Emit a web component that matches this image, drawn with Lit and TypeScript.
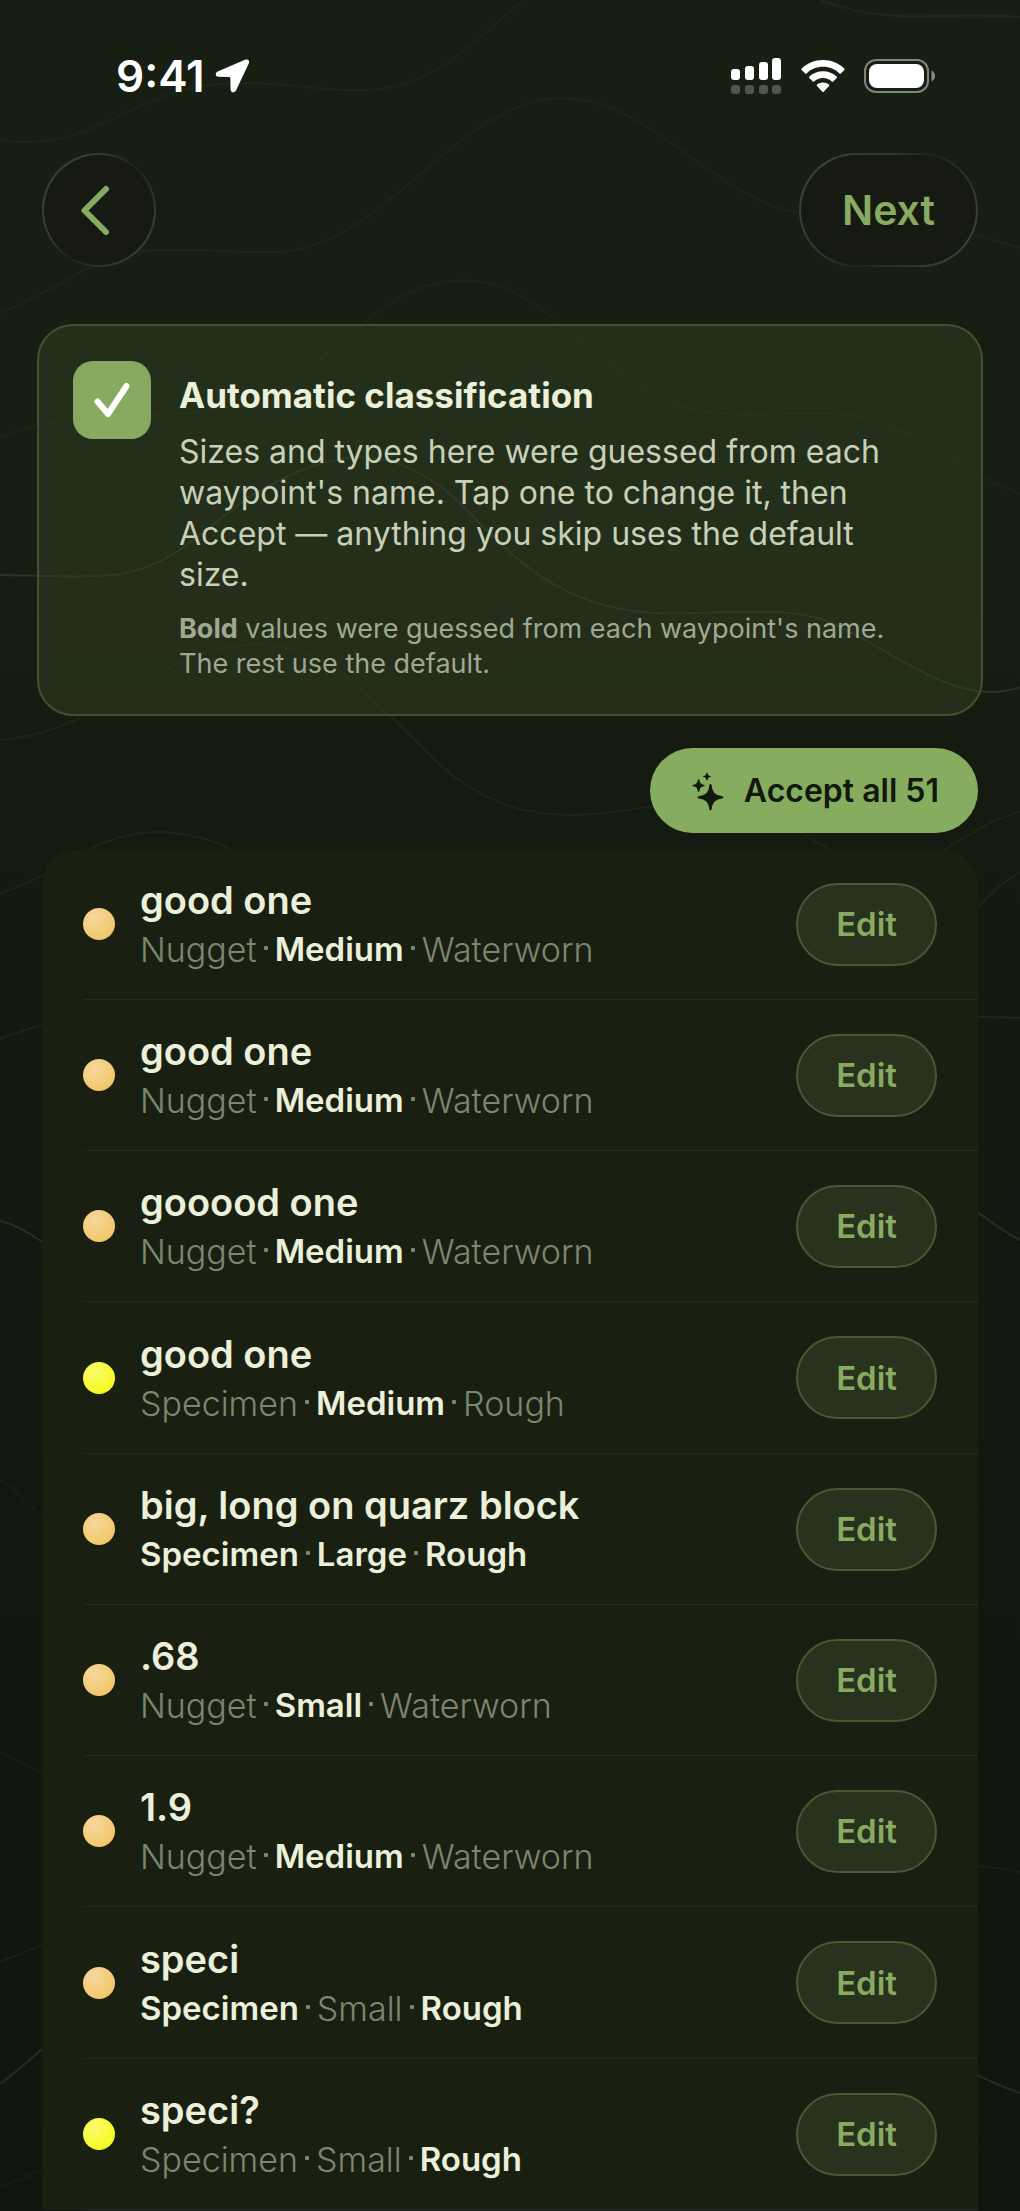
import { LitElement, html, css, svg } from "lit";
import { customElement, property, state } from "lit/decorators.js";
import { classMap } from "lit/directives/class-map.js";

interface Tag {
  text: string;
  guessed: boolean;
}

interface Waypoint {
  name: string;
  tone: "amber" | "yellow";
  tags: Tag[];
}

const dim = (text: string): Tag => ({ text, guessed: false });
const bold = (text: string): Tag => ({ text, guessed: true });

const WAYPOINTS: Waypoint[] = [
  { name: "good one", tone: "amber", tags: [dim("Nugget"), bold("Medium"), dim("Waterworn")] },
  { name: "good one", tone: "amber", tags: [dim("Nugget"), bold("Medium"), dim("Waterworn")] },
  { name: "gooood one", tone: "amber", tags: [dim("Nugget"), bold("Medium"), dim("Waterworn")] },
  { name: "good one", tone: "yellow", tags: [dim("Specimen"), bold("Medium"), dim("Rough")] },
  { name: "big, long on quarz block", tone: "amber", tags: [bold("Specimen"), bold("Large"), bold("Rough")] },
  { name: ".68", tone: "amber", tags: [dim("Nugget"), bold("Small"), dim("Waterworn")] },
  { name: "1.9", tone: "amber", tags: [dim("Nugget"), bold("Medium"), dim("Waterworn")] },
  { name: "speci", tone: "amber", tags: [bold("Specimen"), dim("Small"), bold("Rough")] },
  { name: "speci?", tone: "yellow", tags: [dim("Specimen"), dim("Small"), bold("Rough")] },
];

// Contour lines of the topographic backdrop: path and opacity.
const CONTOURS: [string, number][] = [
  ["M0 140C60 149 95 127 135 108C180 88 200 83 250 83C300 84 330 93 380 89C440 82 480 35 524 0", 0.04],
  ["M0 313C50 296 90 256 145 251C200 246 250 256 290 251C350 242 400 190 455 145C510 103 545 92 590 101C660 118 720 195 790 211C850 224 920 214 1020 248", 0.04],
  ["M820 0C870 18 900 17 940 16C980 16 1000 15 1020 17", 0.05],
  ["M0 437C60 413 110 416 190 413C300 402 350 325 400 297C440 276 490 272 530 302C590 340 630 395 700 411C760 420 830 404 880 422C930 440 970 475 1020 494", 0.04],
  ["M0 575C50 576 90 578 120 574C190 562 215 510 280 480C340 450 390 445 450 494C500 540 540 600 640 612C700 618 780 602 830 622C890 650 940 692 990 692C1005 692 1012 690 1020 687", 0.13],
  ["M0 740C70 735 120 695 180 662C230 640 290 634 340 672C390 715 410 735 440 765C480 800 520 815 571 815C610 815 640 806 660 806", 0.05],
  ["M0 893C60 876 90 832 160 832C240 834 260 880 320 890", 0.06],
  ["M0 1038C20 1032 40 1024 70 1018", 0.05],
  ["M0 1221C18 1225 34 1236 60 1254", 0.13],
  ["M0 1480C18 1490 32 1508 50 1524", 0.04],
  ["M0 1753C16 1760 30 1768 50 1776", 0.04],
  ["M0 1961C16 1957 30 1950 50 1941", 0.06],
  ["M0 2084C16 2072 30 2060 50 2042", 0.12],
  ["M0 2186C16 2181 30 2175 50 2167", 0.04],
  ["M800 832L830 850M930 858C970 834 995 818 1020 812", 0.05],
  ["M970 912C990 898 1000 882 1020 872", 0.06],
  ["M970 1016C990 1018 1005 1017 1020 1018", 0.07],
  ["M970 1208C985 1216 1000 1230 1020 1240", 0.12],
  ["M970 1866C990 1866 1005 1869 1020 1872", 0.05],
  ["M970 2072C990 2081 1005 2088 1020 2093", 0.12],
];

@customElement("topo-backdrop")
export class TopoBackdrop extends LitElement {
  static styles = css`
    :host { display: block; }
    .map { display: block; width: 100%; height: 100%; }
    .line { fill: none; stroke: #c3d2a4; stroke-width: 2; }
  `;

  render() {
    return html`<svg class="map" viewBox="0 0 1020 2211" preserveAspectRatio="none" aria-hidden="true">
      ${CONTOURS.map(([d, o]) => svg`<path class="line" d=${d} stroke-opacity=${o}></path>`)}
    </svg>`;
  }
}

@customElement("status-bar")
export class StatusBar extends LitElement {
  static styles = css`
    :host {
      display: flex;
      justify-content: space-between;
      align-items: center;
      height: 52px;
      padding: 50px 84px 0 116px;
      color: #fff;
    }
    .group { display: flex; align-items: center; }
    .left { gap: 10px; }
    .right { gap: 19px; }
    .time { font-size: 44px; font-weight: 600; line-height: 52px; }
    svg { display: block; fill: currentColor; }
  `;

  render() {
    return html`
      <div class="group left">
        <span class="time">9:41</span>
        <svg width="36" height="36" viewBox="0 0 36 36" aria-hidden="true">
          <path d="M30.500 1.600 2.700 13.500C-.100 14.900.200 18.500 3.200 18.800L14.300 19.100C14.900 19.100 15.300 19.400 15.300 20L15.600 31.400C15.900 34.800 19.500 35.300 21 32.500L33.900 5.200C34.900 2.700 33 .700 30.500 1.600Z"></path>
        </svg>
      </div>
      <div class="group right">
        <svg width="51" height="38" viewBox="0 0 51 38" aria-hidden="true">
          <rect x="0" y="12" width="9" height="11" rx="3"></rect>
          <rect x="14" y="9" width="9" height="14" rx="3"></rect>
          <rect x="28" y="5" width="9" height="18" rx="3"></rect>
          <rect x="41" y="1" width="9" height="22" rx="3"></rect>
          <g opacity="0.250">
            <rect x="0" y="28" width="9" height="9" rx="3"></rect>
            <rect x="14" y="28" width="9" height="9" rx="3"></rect>
            <rect x="28" y="28" width="9" height="9" rx="3"></rect>
            <rect x="41" y="28" width="9" height="9" rx="3"></rect>
          </g>
        </svg>
        <svg width="44" height="34" viewBox="0 0 44 34" aria-hidden="true">
          <path d="M22 1C30.300 1 37.800 4.200 43.300 9.500Q44 10.200 43.300 11L39.900 14.400Q39.200 15 38.500 14.400C34.200 10.300 28.400 7.800 22 7.800S9.800 10.300 5.500 14.400Q4.800 15 4.100 14.400L.700 11Q0 10.200.700 9.500C6.200 4.200 13.700 1 22 1Z"></path>
          <path d="M22 12.200C27.300 12.200 32.100 14.200 35.700 17.600Q36.400 18.300 35.700 19L32.200 22.400Q31.600 23 30.900 22.400C28.500 20.300 25.400 19 22 19S15.500 20.300 13.100 22.400Q12.400 23 11.800 22.400L8.300 19Q7.600 18.300 8.300 17.600C11.900 14.200 16.700 12.200 22 12.200Z"></path>
          <path d="M22 23.400C24.300 23.400 26.400 24.200 28 25.500Q28.700 26.200 28 26.900L22.700 32.700Q22 33.400 21.300 32.700L16 26.900Q15.300 26.200 16 25.500C17.600 24.200 19.700 23.400 22 23.400Z"></path>
        </svg>
        <svg width="72" height="34" viewBox="0 0 72 34" aria-hidden="true">
          <rect x="1" y="1" width="63" height="32" rx="11" fill="none" stroke="#fff" stroke-opacity="0.450" stroke-width="2"></rect>
          <rect x="5" y="5" width="55" height="24" rx="8"></rect>
          <path d="M67.500 11.500C69.600 12.600 71 14.600 71 17S69.600 21.400 67.500 22.500Z" opacity="0.500"></path>
        </svg>
      </div>
    `;
  }
}

@customElement("waypoint-row")
export class WaypointRow extends LitElement {
  @property({ attribute: false }) waypoint!: Waypoint;

  static styles = css`
    :host { display: flex; padding-left: 41px; }
    .row {
      flex: 1;
      display: flex;
      align-items: center;
      padding-right: 41px;
      border-bottom: 1px solid #262c1f;
    }
    .dot { width: 32px; height: 32px; border-radius: 50%; margin-right: 25px; flex: none; }
    .amber { background: radial-gradient(circle at 35% 30%, #f6d79d, #f3cb74 60%, #eabb5a); }
    .yellow { background: radial-gradient(circle at 35% 30%, #fbfa72, #f8fb2c 60%, #eff014); }
    .text { flex: 1; min-width: 0; }
    .name { margin: 0; font-size: 38px; font-weight: 600; line-height: 51px; color: #ebf0da; }
    .tags { display: flex; gap: 7px; margin: 0; line-height: 47px; color: #7c8770; }
    .tag { font-size: 34px; font-weight: 300; }
    .guessed { font-size: 33px; font-weight: 600; color: #ebf0da; }
    .sep { width: 4px; height: 4px; margin-top: 20px; background: #7c8770; border-radius: 1px; }
    .edit {
      flex: none;
      height: 83px;
      padding: 0 38px;
      border: 2px solid #4a5931;
      border-radius: 42px;
      background: #28321c;
      color: #87ab61;
      font: inherit;
      font-size: 33px;
      font-weight: 600;
    }
  `;

  render() {
    const { name, tone, tags } = this.waypoint;
    return html`
      <div class="row">
        <span class=${classMap({ dot: true, [tone]: true })}></span>
        <div class="text">
          <h3 class="name">${name}</h3>
          <p class="tags">
            ${tags.map((t, i) => html`${i > 0 ? html`<span class="sep"></span>` : null}<span
                class=${classMap({ tag: true, guessed: t.guessed })}>${t.text}</span>`)}
          </p>
        </div>
        <button class="edit" type="button">Edit</button>
      </div>
    `;
  }
}

@customElement("app-root")
export class AppRoot extends LitElement {
  @state() private automatic = true;

  static styles = css`
    :host {
      display: block;
      position: relative;
      min-height: 100vh;
      overflow: hidden;
      background: linear-gradient(#171f13 0, #171e13 520px, #141a10 820px, #10150e 100%);
      font-family: Inter, "Liberation Sans", sans-serif;
      color: #ebf0da;
    }
    .backdrop { position: absolute; inset: 0; }
    .screen { position: relative; display: flex; flex-direction: column; }
    .nav {
      display: flex;
      justify-content: space-between;
      padding: 51px 42px 0;
    }
    .glass {
      box-sizing: border-box;
      height: 114px;
      border: 2px solid transparent;
      border-radius: 57px;
      background:
        linear-gradient(#171a12, #171a12) padding-box,
        linear-gradient(125deg, #3d4636 5%, #33392b 35%, #1e2518 52%, #262c20 62%, #3f4838 95%) border-box;
      color: #87ab61;
      font: inherit;
      font-size: 41px;
      font-weight: 600;
    }
    .back { width: 114px; padding: 0; display: grid; place-items: center; }
    .next { padding: 0 41px; }
    .icon { display: block; }
    .card {
      display: flex;
      gap: 28px;
      margin: 57px 37px 0;
      padding: 35px 34px 33px;
      border: 2px solid #43522e;
      border-radius: 36px;
      background: rgba(50, 64, 35, 0.500);
    }
    .check { flex: none; display: grid; width: 78px; height: 78px; }
    .box {
      grid-area: 1 / 1;
      appearance: none;
      width: 78px;
      height: 78px;
      margin: 0;
      border-radius: 20px;
      background: #3b4a2a;
    }
    .box:checked { background: #86ab60; }
    .tick { grid-area: 1 / 1; place-self: center; visibility: hidden; pointer-events: none; }
    .box:checked + .tick { visibility: visible; }
    .copy { flex: 1; min-width: 0; }
    .title { margin: 11px 0 0; font-size: 35px; font-weight: 700; line-height: 46px; }
    .lead { margin: 13px 34px 0 0; font-size: 32px; line-height: 41px; color: #c8d0b7; }
    .note { margin: 16px 34px 0 0; font-size: 27px; line-height: 35px; color: #a0a98f; }
    .strong { font-weight: 700; }
    .accept {
      align-self: flex-end;
      display: flex;
      align-items: center;
      gap: 20px;
      height: 85px;
      margin: 32px 42px 0;
      padding: 0 39px 0 41px;
      border: 0;
      border-radius: 43px;
      background: #86ac60;
      color: #11180c;
      font: inherit;
      font-size: 32px;
      font-weight: 600;
    }
    .list {
      margin: 16px 42px 0;
      padding: 0;
      list-style: none;
      border-radius: 36px 36px 0 0;
      background: #1a2011;
    }
    .item { display: grid; height: 151px; }
    .item:nth-child(4n) { height: 152px; }
  `;

  private toggle(e: Event) {
    this.automatic = (e.target as HTMLInputElement).checked;
  }

  render() {
    return html`
      <topo-backdrop class="backdrop"></topo-backdrop>
      <div class="screen">
        <status-bar></status-bar>
        <nav class="nav">
          <button class="glass back" type="button" aria-label="Back">
            <svg class="icon" width="40" height="56" viewBox="0 0 40 56" fill="none" stroke="#87ab61"
              stroke-width="6" stroke-linecap="round" stroke-linejoin="round" aria-hidden="true">
              <path d="M27 7 5.500 28.500 27 50"></path>
            </svg>
          </button>
          <button class="glass next" type="button">Next</button>
        </nav>
        <section class="card">
          <span class="check">
            <input class="box" id="automatic" type="checkbox" .checked=${this.automatic} @change=${this.toggle} />
            <svg class="tick" width="40" height="40" viewBox="0 0 40 40" fill="none" stroke="#fff"
              stroke-width="6" stroke-linecap="round" stroke-linejoin="round" aria-hidden="true">
              <path d="M5.500 21.500 16 34 34.500 6"></path>
            </svg>
          </span>
          <div class="copy">
            <h2 class="title"><label for="automatic">Automatic classification</label></h2>
            <p class="lead">
              Sizes and types here were guessed from each waypoint's name. Tap one to change it, then
              Accept — anything you skip uses the default size.
            </p>
            <p class="note">
              <b class="strong">Bold</b> values were guessed from each waypoint's name. The rest use the default.
            </p>
          </div>
        </section>
        <button class="accept" type="button">
          <svg class="icon" width="33" height="40" viewBox="0 0 33 40" fill="currentColor" aria-hidden="true">
            <path d="M19.500 13C20.300 13 20.600 13.700 20.700 14.500C21.700 21.500 23.500 23.700 31.200 25.200C32 25.400 32.500 25.700 32.500 26.300S32 27.200 31.200 27.400C23.500 28.900 21.700 31.100 20.700 38.100C20.600 38.900 20.300 39.500 19.500 39.500S18.400 38.900 18.300 38.100C17.300 31.100 15.500 28.900 7.800 27.400C7 27.200 6.500 26.900 6.500 26.300S7 25.400 7.800 25.200C15.500 23.700 17.300 21.500 18.300 14.500C18.400 13.700 18.700 13 19.500 13Z"></path>
            <path d="M7.600 8.200C8.100 8.200 8.300 8.600 8.400 9.100C9 12.300 9.800 13.200 13 13.900C13.500 14 13.800 14.200 13.800 14.600S13.500 15.200 13 15.300C9.800 16 9 16.900 8.400 20.100C8.300 20.600 8.100 21 7.600 21S6.900 20.600 6.800 20.100C6.200 16.900 5.400 16 2.200 15.300C1.700 15.200 1.400 15 1.400 14.600S1.700 14 2.200 13.900C5.400 13.200 6.200 12.300 6.800 9.100C6.900 8.600 7.100 8.200 7.600 8.200Z"></path>
            <path d="M16 1.500C16.400 1.500 16.500 1.800 16.600 2.200C16.900 4 17.600 4.600 19.400 5C19.800 5.100 20 5.200 20 5.500S19.800 5.900 19.400 6C17.600 6.400 16.900 7 16.600 8.800C16.500 9.200 16.400 9.500 16 9.500S15.500 9.200 15.400 8.800C15.100 7 14.400 6.400 12.600 6C12.200 5.900 12 5.800 12 5.500S12.200 5.100 12.600 5C14.400 4.600 15.100 4 15.400 2.200C15.500 1.800 15.600 1.500 16 1.500Z"></path>
          </svg>
          Accept all 51
        </button>
        <ul class="list">
          ${WAYPOINTS.map((w) => html`<li class="item"><waypoint-row .waypoint=${w}></waypoint-row></li>`)}
        </ul>
      </div>
    `;
  }
}
